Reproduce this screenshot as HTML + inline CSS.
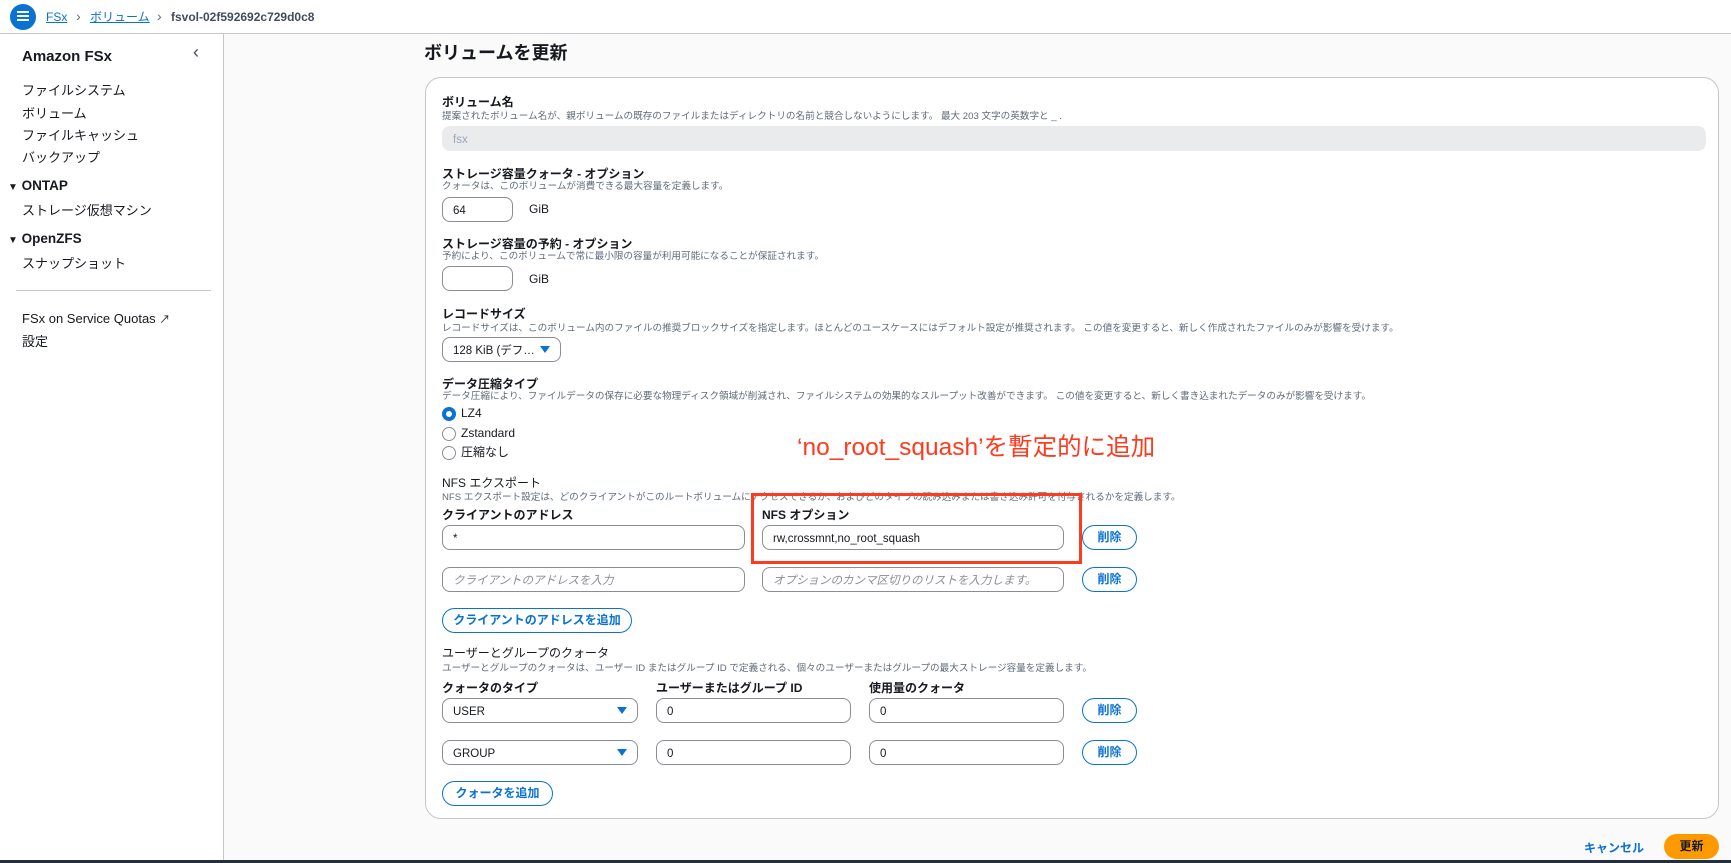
<!DOCTYPE html>
<html><head><meta charset="utf-8"><style>
*{box-sizing:border-box;margin:0;padding:0}
body{width:1731px;height:863px;overflow:hidden;background:#fafafa;font-family:"Liberation Sans","Noto Sans CJK JP",sans-serif;color:#16191f;position:relative}
.a{position:absolute;white-space:nowrap;line-height:1.2}
.t{margin-top:2px}
.hdr{position:absolute;left:0;top:0;width:1731px;height:34px;background:#fff;border-bottom:1px solid #c6c6cd}
.side{position:absolute;left:0;top:34px;width:224px;height:826px;background:#fff;border-right:1px solid #c6c6cd}
.nav{font-size:13px;color:#16191f;left:22px;margin-top:2px}
.card{position:absolute;left:425px;top:77px;width:1294px;height:742px;background:#fff;border:1px solid #c6c6cd;border-radius:16px}
.lb{font-size:12px;font-weight:bold;left:442px;margin-top:2px}
.ds{font-size:9.6px;color:#5f6b7a;left:442px;margin-top:2px}
.in{position:absolute;height:25px;border:1px solid #8c8c94;border-radius:8px;background:#fff;font-size:11.5px;padding:3px 10px 0;line-height:20px;white-space:nowrap}
.ph{color:#8c8c94;font-style:italic}
.btn{position:absolute;height:25px;border:1.5px solid #0972d3;border-radius:14px;color:#0972d3;font-size:12px;font-weight:bold;text-align:center;line-height:22px;background:#fff}
.tri{position:absolute;width:0;height:0;border-left:5px solid transparent;border-right:5px solid transparent;border-top:7px solid #0972d3}
.rad{position:absolute;width:14px;height:14px;border:1.5px solid #8c8c94;border-radius:50%;background:#fff}
</style></head><body>
<div class="hdr"></div>
<div class="a" style="left:10px;top:4px;width:26px;height:26px;border-radius:50%;background:#0972d3"></div>
<div class="a" style="left:17px;top:11px;width:12px;height:2px;background:#fff;box-shadow:0 4px 0 #fff,0 8px 0 #fff"></div>
<div class="a" style="left:46px;top:10px;font-size:12px;color:#0972d3;text-decoration:underline">FSx</div>
<div class="a" style="left:76px;top:8px;font-size:14px;color:#5f6b7a">›</div>
<div class="a" style="left:90px;top:10px;font-size:12px;color:#0972d3;text-decoration:underline">ボリューム</div>
<div class="a" style="left:157px;top:8px;font-size:14px;color:#5f6b7a">›</div>
<div class="a" style="left:171px;top:10px;font-size:12px;color:#414d5c;font-weight:bold">fsvol-02f592692c729d0c8</div>

<div class="side"></div>
<div class="a" style="left:22px;top:48px;font-size:15px;font-weight:bold">Amazon FSx</div>
<div class="a" style="left:193px;top:42px;font-size:18px;color:#414d5c">‹</div>
<div class="a nav" style="top:81px">ファイルシステム</div>
<div class="a nav" style="top:104px">ボリューム</div>
<div class="a nav" style="top:126px">ファイルキャッシュ</div>
<div class="a nav" style="top:148px">バックアップ</div>
<div class="a t" style="left:8px;top:176px;font-size:13.5px;font-weight:bold"><span style="font-size:10px">▼</span> ONTAP</div>
<div class="a nav" style="top:201px">ストレージ仮想マシン</div>
<div class="a t" style="left:8px;top:229px;font-size:13.5px;font-weight:bold"><span style="font-size:10px">▼</span> OpenZFS</div>
<div class="a nav" style="top:254px">スナップショット</div>
<div class="a" style="left:16px;top:290px;width:195px;height:1px;background:#c6c6cd"></div>
<div class="a nav" style="top:309px">FSx on Service Quotas <span style="font-size:11px">↗</span></div>
<div class="a nav" style="top:332px">設定</div>

<div class="a t" style="left:424px;top:41px;font-size:18px;font-weight:bold">ボリュームを更新</div>
<div class="card"></div>

<div class="a lb" style="top:93px">ボリューム名</div>
<div class="a ds" style="top:109px">提案されたボリューム名が、親ボリュームの既存のファイルまたはディレクトリの名前と競合しないようにします。 最大 203 文字の英数字と _ .</div>
<div class="in" style="left:442px;top:126px;width:1264px;background:#e9ebed;border-color:#e9ebed;color:#9ba7b6">fsx</div>

<div class="a lb" style="top:165px">ストレージ容量クォータ - オプション</div>
<div class="a ds" style="top:179px">クォータは、このボリュームが消費できる最大容量を定義します。</div>
<div class="in" style="left:442px;top:197px;width:71px">64</div>
<div class="a t" style="left:529px;top:200px;font-size:12px">GiB</div>

<div class="a lb" style="top:235px">ストレージ容量の予約 - オプション</div>
<div class="a ds" style="top:249px">予約により、このボリュームで常に最小限の容量が利用可能になることが保証されます。</div>
<div class="in" style="left:442px;top:266px;width:71px"></div>
<div class="a t" style="left:529px;top:270px;font-size:12px">GiB</div>

<div class="a lb" style="top:305px">レコードサイズ</div>
<div class="a ds" style="top:321px">レコードサイズは、このボリューム内のファイルの推奨ブロックサイズを指定します。ほとんどのユースケースにはデフォルト設定が推奨されます。 この値を変更すると、新しく作成されたファイルのみが影響を受けます。</div>
<div class="in" style="left:442px;top:337px;width:119px">128 KiB (デフ…</div>
<div class="tri" style="left:540px;top:346px"></div>

<div class="a lb" style="top:375px">データ圧縮タイプ</div>
<div class="a ds" style="top:389px">データ圧縮により、ファイルデータの保存に必要な物理ディスク領域が削減され、ファイルシステムの効果的なスループット改善ができます。 この値を変更すると、新しく書き込まれたデータのみが影響を受けます。</div>
<div class="rad" style="left:442px;top:407px;border:4px solid #0972d3"></div>
<div class="a" style="left:461px;top:406px;font-size:12px">LZ4</div>
<div class="rad" style="left:442px;top:427px"></div>
<div class="a" style="left:461px;top:426px;font-size:12px">Zstandard</div>
<div class="rad" style="left:442px;top:446px"></div>
<div class="a" style="left:461px;top:445px;font-size:12px">圧縮なし</div>

<div class="a t" style="left:797px;top:431px;font-size:24.5px;color:#ff3b1f">‘no_root_squash’を暫定的に追加</div>

<div class="a t" style="left:442px;top:474px;font-size:12px">NFS エクスポート</div>
<div class="a ds" style="top:490px">NFS エクスポート設定は、どのクライアントがこのルートボリュームにアクセスできるか、およびどのタイプの読み込みまたは書き込み許可を付与されるかを定義します。</div>
<div class="a lb" style="top:506px">クライアントのアドレス</div>
<div class="a lb" style="left:762px;top:506px">NFS オプション</div>
<div class="in" style="left:442px;top:525px;width:303px">*</div>
<div class="in" style="left:762px;top:525px;width:302px">rw,crossmnt,no_root_squash</div>
<div class="btn" style="left:1082px;top:525px;width:55px">削除</div>
<div class="in ph" style="left:442px;top:567px;width:303px">クライアントのアドレスを入力</div>
<div class="in ph" style="left:762px;top:567px;width:302px">オプションのカンマ区切りのリストを入力します。</div>
<div class="btn" style="left:1082px;top:567px;width:55px">削除</div>
<div class="a" style="left:751px;top:493px;width:331px;height:71px;border:3px solid #ff3b1f"></div>
<div class="btn" style="left:442px;top:608px;width:190px">クライアントのアドレスを追加</div>

<div class="a t" style="left:442px;top:644px;font-size:12px">ユーザーとグループのクォータ</div>
<div class="a ds" style="top:661px">ユーザーとグループのクォータは、ユーザー ID またはグループ ID で定義される、個々のユーザーまたはグループの最大ストレージ容量を定義します。</div>
<div class="a lb" style="top:679px">クォータのタイプ</div>
<div class="a lb" style="left:656px;top:679px">ユーザーまたはグループ ID</div>
<div class="a lb" style="left:869px;top:679px">使用量のクォータ</div>
<div class="in" style="left:442px;top:698px;width:196px">USER</div>
<div class="tri" style="left:617px;top:707px"></div>
<div class="in" style="left:656px;top:698px;width:195px">0</div>
<div class="in" style="left:869px;top:698px;width:195px">0</div>
<div class="btn" style="left:1082px;top:698px;width:55px">削除</div>
<div class="in" style="left:442px;top:740px;width:196px">GROUP</div>
<div class="tri" style="left:617px;top:749px"></div>
<div class="in" style="left:656px;top:740px;width:195px">0</div>
<div class="in" style="left:869px;top:740px;width:195px">0</div>
<div class="btn" style="left:1082px;top:740px;width:55px">削除</div>
<div class="btn" style="left:442px;top:781px;width:111px">クォータを追加</div>

<div class="a t" style="left:1584px;top:839px;font-size:12px;font-weight:bold;color:#0972d3">キャンセル</div>
<div class="a" style="left:1664px;top:834px;width:55px;height:25px;border-radius:13px;background:#ff9900;font-size:12px;font-weight:bold;text-align:center;line-height:25px">更新</div>
<div class="a" style="left:0;top:860px;width:1731px;height:3px;background:#232f3e"></div>
</body></html>
